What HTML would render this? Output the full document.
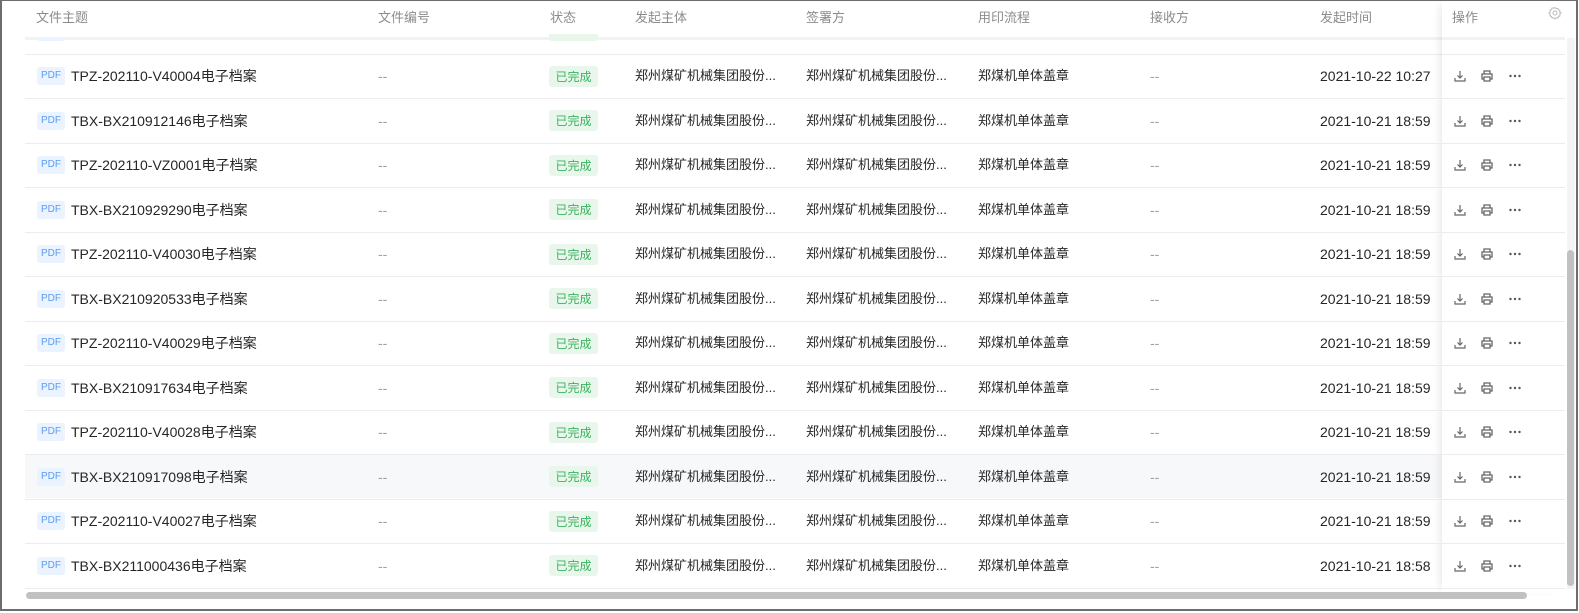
<!DOCTYPE html>
<html><head><meta charset="utf-8"><style>
*{margin:0;padding:0;box-sizing:border-box}
body{width:1579px;height:613px;background:#fff;position:relative;overflow:hidden;font-family:"Liberation Sans","Noto Sans CJK SC",sans-serif;}
.frame{position:absolute;left:0;top:0;width:1578px;height:611px;border:2px solid #6d6d6d;border-top-width:1px}
.t{position:absolute;white-space:nowrap;font-size:14px;line-height:18px;height:18px;color:#262626}
.h{color:#8c8c8c;font-size:13px}
.line{position:absolute;left:25px;width:1540px;height:1px;background:#ececec}
.pdf{position:absolute;left:37px;width:28px;height:18px;background:#eaf3ff;color:#5b9cf0;font-size:10px;line-height:18px;text-align:center;border-radius:3px}
.tag{position:absolute;left:549px;width:49px;height:21px;background:#e8f6ec;color:#3bb35e;font-size:12px;line-height:21px;text-align:center;border-radius:3px;font-family:"Noto Sans CJK SC",sans-serif}
.dash{color:#a0a0a0}
.fix{position:absolute;left:1442px;top:1px;width:123px;height:592px;box-shadow:-6px 0 8px -4px rgba(0,0,0,0.09)}
svg{position:absolute}
</style></head><body>
<div class="frame"></div>
<div style="position:absolute;left:25px;top:37px;width:1540px;height:3px;background:#f2f2f2"></div>
<div class="line" style="top:54px"></div>
<div class="pdf" style="top:30px;height:11px;clip-path:inset(7px 0 0 0)"></div>
<div class="tag" style="top:28px;height:13px;clip-path:inset(6px 0 0 0)"></div>
<div style="position:absolute;left:25px;top:455px;width:1417px;height:43px;background:#f7f8fa"></div>
<div class="fix"></div>
<div class="t h" style="left:36px;top:9px">文件主题</div>
<div class="t h" style="left:378px;top:9px">文件编号</div>
<div class="t h" style="left:550px;top:9px">状态</div>
<div class="t h" style="left:635px;top:9px">发起主体</div>
<div class="t h" style="left:806px;top:9px">签署方</div>
<div class="t h" style="left:978px;top:9px">用印流程</div>
<div class="t h" style="left:1150px;top:9px">接收方</div>
<div class="t h" style="left:1320px;top:9px">发起时间</div>
<div class="t h" style="left:1452px;top:9px">操作</div>
<svg style="left:1548px;top:6px" width="14" height="14" viewBox="0 0 14 14"><path d="M7 1.5l1.2 1.2 1.7-.3.5 1.6 1.6.6-.3 1.7L13 7l-1.3 1.2.3 1.7-1.6.6-.5 1.6-1.7-.3L7 13l-1.2-1.2-1.7.3-.5-1.6-1.6-.6.3-1.7L1 7l1.3-1.2-.3-1.7 1.6-.6.5-1.6 1.7.3z" fill="none" stroke="#bbb" stroke-width="1"/><circle cx="7" cy="7" r="2" fill="none" stroke="#bbb"/></svg>
<div id="rows"></div>
<div style="position:absolute;left:1567px;top:38px;width:8px;height:551px;background:#f4f4f4"></div>
<div style="position:absolute;left:1567px;top:250px;width:7px;height:336px;background:#c1c1c1;border-radius:4px"></div>
<div style="position:absolute;left:26px;top:592px;width:1501px;height:7px;background:#c1c1c1;border-radius:4px"></div>
<script>
const names=["TPZ-202110-V40004","TBX-BX210912146","TPZ-202110-VZ0001","TBX-BX210929290","TPZ-202110-V40030","TBX-BX210920533","TPZ-202110-V40029","TBX-BX210917634","TPZ-202110-V40028","TBX-BX210917098","TPZ-202110-V40027","TBX-BX211000436"];
const times=["2021-10-22 10:27"].concat(Array(10).fill("2021-10-21 18:59"),["2021-10-21 18:58"]);
let h="";
names.forEach((n,i)=>{const c=76+i*44.5;const top=c-9;
h+=`<div class="pdf" style="top:${c-9}px">PDF</div>
<div class="t" style="left:71px;top:${top}px">${n}电子档案</div>
<div class="t dash" style="left:378px;top:${top}px">--</div>
<div class="tag" style="top:${c-10.5}px">已完成</div>
<div class="t" style="left:635px;top:${top}px;font-size:13px">郑州煤矿机械集团股份...</div>
<div class="t" style="left:806px;top:${top}px;font-size:13px">郑州煤矿机械集团股份...</div>
<div class="t" style="left:978px;top:${top}px;font-size:13px">郑煤机单体盖章</div>
<div class="t dash" style="left:1150px;top:${top}px">--</div>
<div class="t" style="left:1320px;top:${top}px">${times[i]}</div>
<svg style="left:1453px;top:${c-7}px" width="14" height="14" viewBox="0 0 14 14"><path d="M7 2v7M4.5 6.5L7 9l2.5-2.5M2 9v3h10V9" fill="none" stroke="#666" stroke-width="1.2"/></svg>
<svg style="left:1480px;top:${c-7}px" width="14" height="14" viewBox="0 0 14 14"><path d="M4 5V2h6v3M4 10H2V5h10v5h-2M4 8h6v4H4z" fill="none" stroke="#666" stroke-width="1.3"/></svg>
<svg style="left:1508px;top:${c-2}px" width="14" height="4" viewBox="0 0 14 4"><circle cx="2.5" cy="2" r="1.2" fill="#555"/><circle cx="7" cy="2" r="1.2" fill="#555"/><circle cx="11.5" cy="2" r="1.2" fill="#555"/></svg>
<div class="line" style="top:${Math.round(c+22)}px"></div>`;});
document.getElementById('rows').innerHTML=h;
</script>
</body></html>
